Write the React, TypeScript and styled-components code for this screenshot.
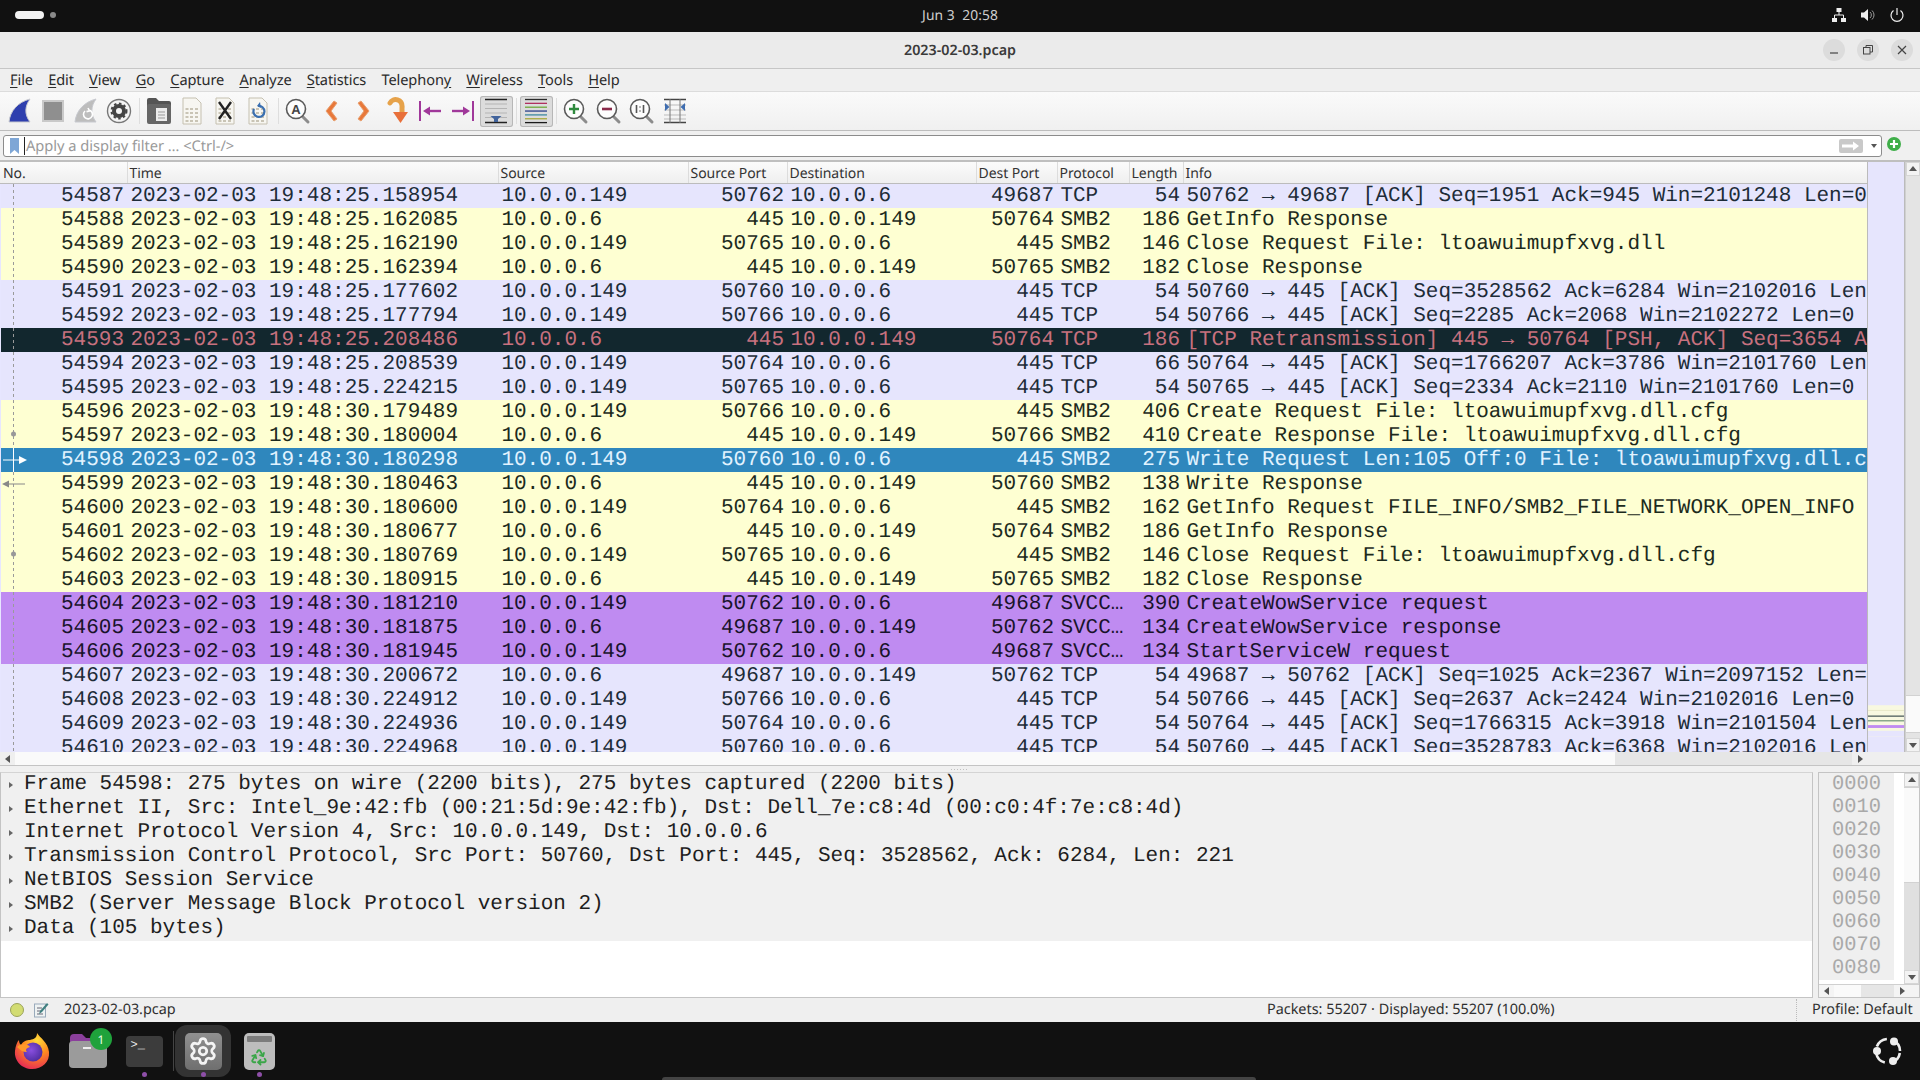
import React from "react";
import styled, { createGlobalStyle } from "styled-components";
import { Recycle, Settings } from "lucide-react";

const Global = createGlobalStyle`
  html, body { margin: 0; padding: 0; background: #111; }
  * { box-sizing: border-box; }
  body { font-family: "Noto Sans", sans-serif; text-rendering: geometricPrecision; }
`;

const Screen = styled.div`
  width: 1920px; height: 1080px; overflow: hidden;
  display: flex; flex-direction: column; background: #f0f0f0;
`;

/* Top bar */
const TopBar = styled.div`
  height: 32px; flex: none; background: #111; color: #cfcfcf;
  display: grid; grid-template-columns: 1fr auto 1fr; align-items: center;
  padding: 0 15px 2px 15px;
`;
const Workspaces = styled.div`display: flex; align-items: center; gap: 6px;`;
const WorkspacePill = styled.span`width: 29px; height: 8px; border-radius: 4px; background: #f2f2f2;`;
const WorkspaceDot = styled.span`width: 6px; height: 6px; border-radius: 50%; background: #8a8a8a;`;
const Clock = styled.div`font-size: 13.8px; letter-spacing: .1px; white-space: pre;`;
const Tray = styled.div`display: flex; justify-content: flex-end; align-items: center; gap: 13px;`;

/* Title bar */
const TitleBar = styled.div`
  height: 37px; flex: none; background: #ebebeb; border-bottom: 1px solid #c6c6c6;
  display: grid; grid-template-columns: 1fr auto 1fr; align-items: center;
`;
const Title = styled.div`grid-column: 2; font-size: 14.3px; font-weight: 600; color: #3a3a3a;`;
const WindowButtons = styled.div`grid-column: 3; display: flex; justify-content: flex-end; gap: 12px; padding-right: 7px;`;
const WindowButton = styled.div`
  width: 22px; height: 22px; border-radius: 50%; background: #dcdcdc;
  display: flex; align-items: center; justify-content: center;
`;

/* Menu */
const MenuBar = styled.div`
  height: 23px; flex: none; background: #efefef; border-bottom: 1px solid #dcdcdc;
  display: flex; align-items: center; gap: 15.2px; padding-left: 10px;
  font-size: 14.6px; color: #2b2b2b; letter-spacing: -.1px;
`;
const Mnemonic = styled.span`text-decoration: underline; text-underline-offset: 2px;`;

/* Toolbar */
const ToolBar = styled.div`
  height: 39px; flex: none; display: flex; align-items: center; padding-left: 3.5px;
  background: linear-gradient(#fafafa, #f0f0f0); border-bottom: 1px solid #bdbdbd;
`;
const ToolButton = styled.div<{ $on?: boolean }>`
  width: 33px; height: 31px; display: flex; align-items: center; justify-content: center;
  border-radius: 3px; flex: none;
  ${p => p.$on ? "background:#dcdcdc; box-shadow: inset 0 0 0 1px #b7b7b7;" : ""}
`;
const ToolSep = styled.div`width: 7px; height: 26px; flex: none;
  &::after { content: ""; display: block; width: 1px; height: 26px; margin: 0 auto; background: #dedede; }
`;

/* Filter */
const FilterBar = styled.div`
  height: 31px; flex: none; padding: 4px 0 0 3px; display: flex; align-items: flex-start;
  background: #f0f0f0; border-bottom: 2px solid #bfbfbf;
`;
const FilterBox = styled.div`
  width: 1879px; height: 22px; background: #fff; border: 1px solid #8c8c8c; border-radius: 3px;
  display: flex; align-items: center; padding: 0 2px 0 5px;
`;
const Caret = styled.span`width: 1px; height: 18px; background: #222; margin: 0 0 0 4px;`;
const Placeholder = styled.span`
  flex: 1; font-size: 14.7px; color: #9a9a9a; padding-left: 1px; letter-spacing: -.05px;
`;
const ApplyButton = styled.div`
  width: 24px; height: 14px; background: #c9c9c9; border-radius: 2px; margin-right: 8px;
  display: flex; align-items: center; justify-content: center;
`;
const DropCaret = styled.span`
  width: 0; height: 0; border-left: 3px solid transparent; border-right: 3px solid transparent;
  border-top: 4px solid #555; margin-right: 2px;
`;
const AddFilter = styled.div`margin: 2px 0 0 5px; display: flex;`;

/* Packet list */
const PacketArea = styled.div`
  height: 590px; flex: none; display: grid; grid-template-columns: 1867px 38px 15px;
`;
const PacketTable = styled.div`display: flex; flex-direction: column; min-width: 0; overflow: hidden;`;
const HeaderRow = styled.div`
  height: 22px; flex: none; display: grid; grid-template-columns: 127px 371px 190px 99px 189px 81px 72px 54px 684px;
  background: linear-gradient(#fbfbfb, #efefef); border-bottom: 1px solid #bcbcbc;
`;
const HeaderCell = styled.div`
  font-size: 14px; color: #333; padding-left: 1.5px; line-height: 23px; letter-spacing: -.05px;
  border-left: 1px solid #dcdcdc; white-space: nowrap; overflow: hidden;
  &:first-child { border-left: 0; padding-left: 3px; }
`;
const Rows = styled.div`flex: 1; overflow: hidden; padding-left: 1px; background: #e7e6ff;`;

type Kind = "tcp" | "smb" | "svc" | "bad" | "sel";
const palette: Record<Kind, { bg: string; fg: string }> = {
  tcp: { bg: "#e6e5fd", fg: "#1d2c38" },
  smb: { bg: "#feffd2", fg: "#1c2a1c" },
  svc: { bg: "#bf8bf1", fg: "#19132b" },
  bad: { bg: "#12272e", fg: "#c7717f" },
  sel: { bg: "#2f87bd", fg: "#e2f3ff" },
};
const Row = styled.div<{ $kind: Kind }>`
  height: 24px; display: grid; grid-template-columns: 126px 371px 190px 99px 189px 81px 72px 54px 684px;
  position: relative; overflow: hidden;
  background: ${p => palette[p.$kind].bg}; color: ${p => palette[p.$kind].fg};
  font: 21px/26px "Liberation Mono", monospace; white-space: pre;
  &::before {
    content: ""; position: absolute; left: 12px; top: 0; bottom: 0; width: 1px;
    background: ${p => p.$kind === "sel" ? "#fff" : "repeating-linear-gradient(#9a9a9a 0 3px, transparent 3px 6px)"};
  }
`;
const Cell = styled.div<{ $right?: boolean }>`
  overflow: hidden; padding: 0 3px 0 3.4px; text-align: ${p => p.$right ? "right" : "left"};
`;
const Relation = styled.svg`position: absolute; left: 0; top: 0;`;

const Minimap = styled.svg`display: block; background: #e6e5fd; border-left: 1px solid #bbb; border-right: 1px solid #bbb;`;
const VScroll = styled.div`display: flex; flex-direction: column; background: #e4e4e4; border-left: 1px solid #d0d0d0;`;
const VBtn = styled.div`
  height: 14px; flex: none; background: #f3f3f3; display: flex; align-items: center; justify-content: center;
  border: 1px solid #d6d6d6;
`;
const VTrack = styled.div<{ $grow?: boolean; $h?: number }>`
  ${p => p.$grow ? "flex:1;" : `height:${p.$h}px; flex:none;`}
`;
const VThumb = styled.div<{ $h: number }>`
  height: ${p => p.$h}px; flex: none; background: #fafafa; border: 1px solid #d2d2d2; border-width: 1px 0;
`;
const HScrollRow = styled.div`
  height: 14px; flex: none; display: flex; background: #efefef; border-bottom: 1px solid #c4c4c4;
`;
const HBtn = styled.div`
  width: 15px; flex: none; display: flex; align-items: center; justify-content: center;
`;
const HThumb = styled.div<{ $w: number }>`
  width: ${p => p.$w}px; flex: none; background: #fafafa;
`;
const HTrack = styled.div<{ $w: number }>`width: ${p => p.$w}px; flex: none; background: #e6e6e6;`;

const Splitter = styled.div`
  height: 6px; flex: none; background: #f0f0f0; display: flex; justify-content: center; align-items: center;
  &::after { content: ""; width: 18px; height: 1px; background: repeating-linear-gradient(90deg, #c0c0c0 0 1px, transparent 1px 3px); }
`;

/* Details */
const Details = styled.div`height: 226px; flex: none; display: flex;`;
const Tree = styled.div`
  width: 1813px; flex: none; background: #fff; border: 1px solid #c4c4c4; border-top-color: #d4d4d4;
`;
const TreeRow = styled.div`
  height: 24px; background: #f0f0f0; display: flex; align-items: center; color: #1e1e1e;
  font: 21px/24px "Liberation Mono", monospace; white-space: pre;
`;
const Twisty = styled.span`
  width: 23px; flex: none; display: flex; justify-content: center; padding-right: 3px;
  &::before { content: ""; border-left: 4px solid #666; border-top: 3.5px solid transparent; border-bottom: 3.5px solid transparent; }
`;
const PaneGrip = styled.div`width: 5px; flex: none;`;
const HexPane = styled.div`
  flex: 1; min-width: 0; display: grid; grid-template-columns: 1fr 15px; grid-template-rows: 1fr 13px;
  border: 1px solid #c4c4c4; background: #fff;
`;
const HexBody = styled.div`grid-column: 1; grid-row: 1; overflow: hidden; padding: 0 10px 0 0;`;
const HexRow = styled.div`
  height: 23px; background: #efefef; color: #a9a9a9; padding-left: 13px;
  font: 20.4px/23px "Liberation Mono", monospace;
`;
const HexVScroll = styled.div`display: flex; flex-direction: column; background: #e0e0e0; grid-column: 2; grid-row: 1;`;
const HexHScroll = styled.div`display: flex; grid-column: 1 / 3; grid-row: 2; background: #f4f4f4; border-top: 1px solid #d0d0d0;`;

/* Status bar */
const StatusBar = styled.div`
  height: 24px; flex: none; display: flex; align-items: center; background: #efefef;
  font-size: 14.4px; line-height: 26px; color: #2e2e2e; padding-left: 10px;
`;
const StatusFile = styled.span`margin-left: 15px; width: 1203px;`;
const StatusPackets = styled.span`width: 529px;`;
const StatusProfile = styled.span`
  border-left: 1px dotted #bbb; padding-left: 15px; line-height: 22px;
`;

/* Dock */
const Dock = styled.div`
  height: 58px; flex: none; background: #111; position: relative;
  display: flex; align-items: center; padding: 0 16px 0 4px;
`;
const DockItem = styled.div<{ $active?: boolean }>`
  width: 56px; height: 52px; flex: none; position: relative; border-radius: 12px;
  display: flex; align-items: center; justify-content: center;
  ${p => p.$active ? "background:#333;" : ""}
`;
const DockDot = styled.span`
  position: absolute; bottom: 0px; left: 50%; margin-left: -2.5px; width: 5px; height: 5px;
  border-radius: 50%; background: #8e4fa8;
`;
const DockSep = styled.div`width: 3px; height: 40px; flex: none; display: flex; justify-content: center;
  &::after { content: ""; width: 1px; height: 100%; background: #444; }
`;
const Badge = styled.span`
  position: absolute; right: 4px; top: 3px; width: 22px; height: 22px; border-radius: 50%;
  background: #1fa23b; color: #e8ffe8; font-size: 12px; display: flex; align-items: center; justify-content: center;
`;
const SettingsTile = styled.div`
  width: 37px; height: 37px; border-radius: 5px; background: linear-gradient(#909090, #6f6f6f);
  display: flex; align-items: center; justify-content: center; color: #f4f4f4;
`;
const TrashTile = styled.div`
  width: 31px; height: 37px; border-radius: 5px; background: #bdbdbd; color: #3aa648;
  display: flex; flex-direction: column; align-items: center; padding-top: 3px; gap: 6px;
  &::before { content: ""; width: 25px; height: 6px; border-radius: 1px; background: #7c7c7c; }
`;
const TerminalTile = styled.div`
  width: 37px; height: 31px; border-radius: 4px; background: #3c3c3c; color: #eee;
  font: 12px/13px "Liberation Mono", monospace; padding: 3px 0 0 5px;
`;
const HomeHint = styled.div`
  position: absolute; left: 662px; bottom: 0; width: 594px; height: 3px; background: #444;
  border-radius: 4px 4px 0 0;
`;
const UbuntuSlot = styled.div`margin-left: auto; display: flex;`;

/* Icons */
const Shark = ({ fill, ring }: { fill: string; ring?: boolean }) => (
  <svg width="26" height="28" viewBox="0 0 26 28">
    <path d="M2 25 C3 14 11 5 23 2 C18 9 17 17 23 25 Z" fill={fill} stroke="#c7c9cf" strokeWidth="1" />
    {ring && <path d="M16 13 a4.5 4.5 0 1 1 -4 1 M15 11 l1.5 3 -3 .6" fill="none" stroke="#fff" strokeWidth="1.6" />}
  </svg>
);
const Doc = ({ children }: { children?: React.ReactNode }) => (
  <svg width="24" height="28" viewBox="0 0 24 28">
    <path d="M3 1 H16 L21 6 V27 H3 Z" fill="#f7f6f1" stroke="#c5c0b0" />
    <path d="M5.5 12 h3 M10 12 h3 M15 12 h3 M5.5 16 h3 M10 16 h3 M15 16 h3 M5.5 20 h3 M10 20 h3 M15 20 h3 M5.5 24 h3 M10 24 h3 M15 24 h3" stroke="#c9c4b5" strokeWidth="2" />
    {children}
  </svg>
);
const Magnifier = ({ children }: { children?: React.ReactNode }) => (
  <svg width="26" height="28" viewBox="0 0 26 28">
    <path d="M16.5 18.5 L23 25" stroke="#8c8c8c" strokeWidth="3" strokeLinecap="round" />
    <circle cx="11" cy="12" r="9.5" fill="#fdfdfd" stroke="#5a5a5a" strokeWidth="1.6" />
    {children}
  </svg>
);
const Chevron = ({ d }: { d: string }) => (
  <svg width="18" height="26" viewBox="0 0 18 26">
    <path d={d} fill="#e8783a" stroke="#e8a070" strokeWidth="1" strokeLinejoin="round" />
  </svg>
);
const Jump = ({ flip }: { flip?: boolean }) => (
  <svg width="24" height="24" viewBox="0 0 24 24" style={flip ? { transform: "scaleX(-1)" } : undefined}>
    <path d="M2 2 V22" stroke="#a0389a" strokeWidth="2" />
    <path d="M23 12 H10" stroke="#a0389a" strokeWidth="2.4" />
    <path d="M5 12 L12 7.5 V16.5 Z" fill="#a0389a" />
  </svg>
);
const Lines = ({ colors }: { colors: string[] }) => (
  <svg width="24" height="26" viewBox="0 0 24 26">
    {colors.map((c, i) => <path key={i} d={`M1 ${1.5 + i * 3.85} H23`} stroke={c} strokeWidth="1.3" />)}
  </svg>
);
const AutoScroll = () => (
  <svg width="24" height="26" viewBox="0 0 24 26">
    <path d="M1 1.5 H23 M1 24.5 H23" stroke="#222" strokeWidth="1.4" />
    <path d="M1 6 H23 M1 10.5 H23 M1 15 H23 M1 19.5 H23" stroke="#b4b4b4" strokeWidth="1" />
    <path d="M6.5 18 H17.5 L14 21 V24 H10 V21 Z" fill="#41639c" />
  </svg>
);
const ResizeCols = () => (
  <svg width="24" height="26" viewBox="0 0 24 26">
    <path d="M1 1.5 H23 M1 24.5 H23" stroke="#444" strokeWidth="1.3" />
    <path d="M1 7 H23 M1 12 H23 M1 17 H23 M1 21 H23" stroke="#bbb" strokeWidth="1" />
    <path d="M7 1 V25 M17 1 V25" stroke="#777" strokeWidth="1" />
    <path d="M2 5 L6.5 9 L2 13 Z M22 5 L17.5 9 L22 13 Z" fill="#3f6db0" />
  </svg>
);

const Arrow = ({ dir, size = 8, color = "#555" }: { dir: "u" | "d" | "l" | "r"; size?: number; color?: string }) => {
  const pts = { u: "0,6 8,6 4,1", d: "0,2 8,2 4,7", l: "6,0 6,8 1,4", r: "2,0 2,8 7,4" }[dir];
  return <svg width={size} height={size} viewBox="0 0 8 8"><polygon points={pts} fill={color} /></svg>;
};

const Firefox = () => (
  <svg width="38" height="38" viewBox="0 0 38 38">
    <defs>
      <radialGradient id="ffo" cx="65%" cy="20%" r="90%">
        <stop offset="0" stopColor="#ffdb3a" /><stop offset=".45" stopColor="#ff8a1f" /><stop offset="1" stopColor="#e3205c" />
      </radialGradient>
      <radialGradient id="ffp" cx="40%" cy="40%" r="70%">
        <stop offset="0" stopColor="#8a4fe0" /><stop offset="1" stopColor="#4a2a9a" />
      </radialGradient>
    </defs>
    <path d="M24 1 C27 6 35 10 36 20 C37 30 29 37 19 37 C9 37 1 29 2 19 C2.5 14 4 10 6 8 C6 11 7 12 8 13 C10 9 14 8 17 8 C21 7 24 6 24 1 Z" fill="url(#ffo)" />
    <circle cx="20" cy="20" r="9.5" fill="url(#ffp)" />
    <path d="M4 15 C8 11 15 12 17 15 C13 16 12 18 14 20 C10 20 7 18 4 15 Z" fill="#ff9a2a" />
  </svg>
);
const FolderIcon = () => (
  <svg width="40" height="36" viewBox="0 0 40 36">
    <path d="M2 5 a4 4 0 0 1 4 -4 H14 L18 5 H34 a4 4 0 0 1 4 4 V12 H2 Z" fill="#8b3f9c" />
    <rect x="1" y="8" width="38" height="27" rx="4" fill="#9b9b9b" />
    <rect x="15" y="14" width="8" height="2" fill="#eee" />
  </svg>
);
const UbuntuLogo = () => (
  <svg width="32" height="32" viewBox="0 0 32 32">
    <circle cx="16" cy="16" r="12" fill="none" stroke="#eee" strokeWidth="2.6" strokeDasharray="13 7" strokeDashoffset="-2" />
    <circle cx="22" cy="6.5" r="4" fill="#eee" /><circle cx="5" cy="16" r="4" fill="#eee" /><circle cx="21" cy="26" r="4" fill="#eee" />
  </svg>
);

const S149 = "10.0.0.149", S6 = "10.0.0.6";
type P = [Kind, string, string, string, string, string, string, string, string, string];
const packets: P[] = [
  ["tcp","54587","25.158954",S149,"50762",S6,"49687","TCP","54","50762 → 49687 [ACK] Seq=1951 Ack=945 Win=2101248 Len=0"],
  ["smb","54588","25.162085",S6,"445",S149,"50764","SMB2","186","GetInfo Response"],
  ["smb","54589","25.162190",S149,"50765",S6,"445","SMB2","146","Close Request File: ltoawuimupfxvg.dll"],
  ["smb","54590","25.162394",S6,"445",S149,"50765","SMB2","182","Close Response"],
  ["tcp","54591","25.177602",S149,"50760",S6,"445","TCP","54","50760 → 445 [ACK] Seq=3528562 Ack=6284 Win=2102016 Len"],
  ["tcp","54592","25.177794",S149,"50766",S6,"445","TCP","54","50766 → 445 [ACK] Seq=2285 Ack=2068 Win=2102272 Len=0"],
  ["bad","54593","25.208486",S6,"445",S149,"50764","TCP","186","[TCP Retransmission] 445 → 50764 [PSH, ACK] Seq=3654 A"],
  ["tcp","54594","25.208539",S149,"50764",S6,"445","TCP","66","50764 → 445 [ACK] Seq=1766207 Ack=3786 Win=2101760 Len"],
  ["tcp","54595","25.224215",S149,"50765",S6,"445","TCP","54","50765 → 445 [ACK] Seq=2334 Ack=2110 Win=2101760 Len=0"],
  ["smb","54596","30.179489",S149,"50766",S6,"445","SMB2","406","Create Request File: ltoawuimupfxvg.dll.cfg"],
  ["smb","54597","30.180004",S6,"445",S149,"50766","SMB2","410","Create Response File: ltoawuimupfxvg.dll.cfg"],
  ["sel","54598","30.180298",S149,"50760",S6,"445","SMB2","275","Write Request Len:105 Off:0 File: ltoawuimupfxvg.dll.c"],
  ["smb","54599","30.180463",S6,"445",S149,"50760","SMB2","138","Write Response"],
  ["smb","54600","30.180600",S149,"50764",S6,"445","SMB2","162","GetInfo Request FILE_INFO/SMB2_FILE_NETWORK_OPEN_INFO"],
  ["smb","54601","30.180677",S6,"445",S149,"50764","SMB2","186","GetInfo Response"],
  ["smb","54602","30.180769",S149,"50765",S6,"445","SMB2","146","Close Request File: ltoawuimupfxvg.dll.cfg"],
  ["smb","54603","30.180915",S6,"445",S149,"50765","SMB2","182","Close Response"],
  ["svc","54604","30.181210",S149,"50762",S6,"49687","SVCC…","390","CreateWowService request"],
  ["svc","54605","30.181875",S6,"49687",S149,"50762","SVCC…","134","CreateWowService response"],
  ["svc","54606","30.181945",S149,"50762",S6,"49687","SVCC…","134","StartServiceW request"],
  ["tcp","54607","30.200672",S6,"49687",S149,"50762","TCP","54","49687 → 50762 [ACK] Seq=1025 Ack=2367 Win=2097152 Len="],
  ["tcp","54608","30.224912",S149,"50766",S6,"445","TCP","54","50766 → 445 [ACK] Seq=2637 Ack=2424 Win=2102016 Len=0"],
  ["tcp","54609","30.224936",S149,"50764",S6,"445","TCP","54","50764 → 445 [ACK] Seq=1766315 Ack=3918 Win=2101504 Len"],
  ["tcp","54610","30.224968",S149,"50760",S6,"445","TCP","54","50760 → 445 [ACK] Seq=3528783 Ack=6368 Win=2102016 Len"],
];

const relationFor = (no: string) => {
  if (no === "54598") return <Relation width="28" height="24"><path d="M2 12 H20" stroke="#fff" /><path d="M18 8 L26 12 L18 16 Z" fill="#fff" /></Relation>;
  if (no === "54599") return <Relation width="28" height="24"><path d="M6 12 H24" stroke="#888" /><path d="M1 12 L8 8.5 V15.5 Z" fill="#888" /></Relation>;
  if (no === "54597" || no === "54602") return <Relation width="28" height="24"><circle cx="12.5" cy="10" r="2.5" fill="#999" /></Relation>;
  return null;
};

const menu: [string, string, string][] = [
  ["", "F", "ile"], ["", "E", "dit"], ["", "V", "iew"], ["", "G", "o"], ["", "C", "apture"], ["", "A", "nalyze"],
  ["", "S", "tatistics"], ["Telephon", "y", ""], ["", "W", "ireless"], ["", "T", "ools"], ["", "H", "elp"],
];
const headers = ["No.", "Time", "Source", "Source Port", "Destination", "Dest Port", "Protocol", "Length", "Info"];
const tree = [
  "Frame 54598: 275 bytes on wire (2200 bits), 275 bytes captured (2200 bits)",
  "Ethernet II, Src: Intel_9e:42:fb (00:21:5d:9e:42:fb), Dst: Dell_7e:c8:4d (00:c0:4f:7e:c8:4d)",
  "Internet Protocol Version 4, Src: 10.0.0.149, Dst: 10.0.0.6",
  "Transmission Control Protocol, Src Port: 50760, Dst Port: 445, Seq: 3528562, Ack: 6284, Len: 221",
  "NetBIOS Session Service",
  "SMB2 (Server Message Block Protocol version 2)",
  "Data (105 bytes)",
];
const hex = ["0000", "0010", "0020", "0030", "0040", "0050", "0060", "0070", "0080"];

export default function App() {
  return (
    <Screen>
      <Global />
      <TopBar>
        <Workspaces><WorkspacePill /><WorkspaceDot /></Workspaces>
        <Clock>Jun 3  20:58</Clock>
        <Tray>
          <svg width="16" height="16" viewBox="0 0 16 16" fill="#eee"><rect x="5.5" y="1" width="5" height="4" /><rect x="1" y="11" width="5" height="4" /><rect x="10" y="11" width="5" height="4" /><path d="M8 5 V8 M3.5 11 V8 H12.5 V11" stroke="#eee" fill="none" /></svg>
          <svg width="16" height="16" viewBox="0 0 16 16"><path d="M1 5.5 H4 L8 2 V14 L4 10.5 H1 Z" fill="#eee" /><path d="M10 5 a4 4 0 0 1 0 6 M12 3.5 a6 6 0 0 1 0 9" fill="none" stroke="#999" /></svg>
          <svg width="16" height="16" viewBox="0 0 16 16" fill="none" stroke="#eee" strokeWidth="1.2"><path d="M8 1 V8" /><path d="M4.5 3.5 a6 6 0 1 0 7 0" /></svg>
        </Tray>
      </TopBar>

      <TitleBar>
        <Title>2023-02-03.pcap</Title>
        <WindowButtons>
          <WindowButton><svg width="10" height="10"><path d="M1 8 H9" stroke="#444" strokeWidth="1.2" /></svg></WindowButton>
          <WindowButton><svg width="10" height="10" fill="none" stroke="#444"><rect x=".5" y="2.5" width="6.5" height="6.5" /><path d="M3 2.5 V.5 H9.5 V7 H7" /></svg></WindowButton>
          <WindowButton><svg width="10" height="10" stroke="#444" strokeWidth="1.2"><path d="M1 1 L9 9 M9 1 L1 9" /></svg></WindowButton>
        </WindowButtons>
      </TitleBar>

      <MenuBar>
        {menu.map(([a, b, c]) => <span key={a + b + c}>{a}<Mnemonic>{b}</Mnemonic>{c}</span>)}
      </MenuBar>

      <ToolBar>
        <ToolButton><Shark fill="#2e3fae" /></ToolButton>
        <ToolButton><svg width="24" height="26"><rect x="2" y="3" width="20" height="20" fill="#8f8f8f" stroke="#c9c9c9" strokeWidth="2" /></svg></ToolButton>
        <ToolButton><Shark fill="#bdbdbd" ring /></ToolButton>
        <ToolButton><svg width="26" height="26" viewBox="0 0 26 26"><circle cx="13" cy="13" r="11.5" fill="#f4f4f4" stroke="#777" strokeWidth="1.4" /><circle cx="13" cy="13" r="7" fill="#444" /><circle cx="13" cy="13" r="3" fill="#f4f4f4" /><circle cx="13" cy="13" r="7.5" fill="none" stroke="#444" strokeWidth="2" strokeDasharray="2.5 2.5" /></svg></ToolButton>
        <ToolSep />
        <ToolButton><svg width="26" height="28" viewBox="0 0 26 28"><path d="M1 3 a2 2 0 0 1 2 -2 H10 L13 4 H23 a2 2 0 0 1 2 2 V9 H1 Z" fill="#555" /><rect x="1" y="7" width="24" height="20" rx="2" fill="#666" /><rect x="10" y="11" width="11" height="13" fill="#ececec" /><path d="M12 15 h7 M12 18 h7 M12 21 h7" stroke="#999" /></svg></ToolButton>
        <ToolButton><Doc /></ToolButton>
        <ToolButton><Doc><path d="M6 5 L18 22 M18 5 L6 22" stroke="#222" strokeWidth="2.4" /></Doc></ToolButton>
        <ToolButton><Doc><path d="M8 12 a5.5 5.5 0 1 0 4 -3" fill="none" stroke="#3a6fb0" strokeWidth="2.2" /><path d="M14 5 L11 9 L15 11 Z" fill="#3a6fb0" /></Doc></ToolButton>
        <ToolSep />
        <ToolButton><Magnifier><text x="11" y="16.5" textAnchor="middle" fontSize="13" fontWeight="700" fontFamily="Liberation Sans, sans-serif" fill="#444">A</text></Magnifier></ToolButton>
        <ToolButton><Chevron d="M12 3 L15 5 L9 13 L15 21 L12 23 L4 13 Z" /></ToolButton>
        <ToolButton><Chevron d="M6 3 L3 5 L9 13 L3 21 L6 23 L14 13 Z" /></ToolButton>
        <ToolButton><svg width="24" height="28" viewBox="0 0 24 28"><path d="M5 6 C8 0 18 2 17 11 V17" fill="none" stroke="#e6a24a" strokeWidth="5" strokeLinecap="round" /><path d="M8 15 H23 L15.5 26 Z" fill="#e8703a" /></svg></ToolButton>
        <ToolButton><Jump /></ToolButton>
        <ToolButton><Jump flip /></ToolButton>
        <ToolButton $on><AutoScroll /></ToolButton>
        <ToolSep />
        <ToolButton $on><Lines colors={["#2a2a2a", "#b03060", "#6ea83c", "#2a3f8a", "#3f8aa0", "#a8a83c", "#1a1a1a"]} /></ToolButton>
        <ToolSep />
        <ToolButton><Magnifier><path d="M6 12 H16 M11 7 V17" stroke="#2f8a3e" strokeWidth="2.4" /></Magnifier></ToolButton>
        <ToolButton><Magnifier><path d="M6 12 H16" stroke="#8a2a4a" strokeWidth="2.6" /></Magnifier></ToolButton>
        <ToolButton><Magnifier><path d="M7.5 8 V16 M14.5 8 V16" stroke="#555" strokeWidth="1.6" /><path d="M11 9.5 V10.5 M11 13.5 V14.5" stroke="#555" strokeWidth="1.6" /></Magnifier></ToolButton>
        <ToolButton><ResizeCols /></ToolButton>
      </ToolBar>

      <FilterBar>
        <FilterBox>
          <svg width="11" height="16" viewBox="0 0 11 16"><path d="M1 0 H10 V16 L5.5 12 L1 16 Z" fill="#7ea6d6" /></svg>
          <Caret />
          <Placeholder>Apply a display filter … &lt;Ctrl-/&gt;</Placeholder>
          <ApplyButton><svg width="18" height="10" viewBox="0 0 18 10"><path d="M0 3.5 H11 V0.5 L17 5 L11 9.5 V6.5 H0 Z" fill="#fff" /></svg></ApplyButton>
          <DropCaret />
        </FilterBox>
        <AddFilter><svg width="14" height="14" viewBox="0 0 14 14"><circle cx="7" cy="7" r="7" fill="#3fae49" /><path d="M7 3 V11 M3 7 H11" stroke="#fff" strokeWidth="2.2" /></svg></AddFilter>
      </FilterBar>

      <PacketArea>
        <PacketTable>
          <HeaderRow>{headers.map(h => <HeaderCell key={h}>{h}</HeaderCell>)}</HeaderRow>
          <Rows>
            {packets.map(p => (
              <Row key={p[1]} $kind={p[0]}>
                {relationFor(p[1])}
                <Cell $right>{p[1]}</Cell>
                <Cell>{`2023-02-03 19:48:${p[2]}`}</Cell>
                <Cell>{p[3]}</Cell>
                <Cell $right>{p[4]}</Cell>
                <Cell>{p[5]}</Cell>
                <Cell $right>{p[6]}</Cell>
                <Cell>{p[7]}</Cell>
                <Cell $right>{p[8]}</Cell>
                <Cell>{p[9]}</Cell>
              </Row>
            ))}
          </Rows>
        </PacketTable>
        <Minimap width="38" height="590" viewBox="0 0 38 590">
          <rect x="0" y="557" width="38" height="33" fill="#f8f8e0" />
          <rect x="0" y="562" width="38" height="1" fill="#e8e8c8" />
          <rect x="0" y="568" width="38" height="1" fill="#12272e" />
          <rect x="0" y="573" width="38" height="1" fill="#4a7a5a" />
          <rect x="0" y="578" width="38" height="3" fill="#bf8bf1" />
          <rect x="0" y="584" width="38" height="6" fill="#e6e5fd" />
        </Minimap>
        <VScroll>
          <VBtn><Arrow dir="u" /></VBtn>
          <VTrack $h={519} />
          <VThumb $h={38} />
          <VTrack $grow />
          <VBtn><Arrow dir="d" /></VBtn>
        </VScroll>
      </PacketArea>
      <HScrollRow>
        <HBtn><Arrow dir="l" /></HBtn>
        <HThumb $w={1600} />
        <HTrack $w={237} />
        <HBtn><Arrow dir="r" /></HBtn>
      </HScrollRow>
      <Splitter />

      <Details>
        <Tree>
          {tree.map(t => <TreeRow key={t}><Twisty />{t}</TreeRow>)}
        </Tree>
        <PaneGrip />
        <HexPane>
          <HexBody>{hex.map(h => <HexRow key={h}>{h}</HexRow>)}</HexBody>
          <HexVScroll>
            <VBtn><Arrow dir="u" /></VBtn>
            <VThumb $h={96} />
            <VTrack $grow />
            <VBtn><Arrow dir="d" /></VBtn>
          </HexVScroll>
          <HexHScroll>
            <HBtn><Arrow dir="l" /></HBtn>
            <HThumb $w={27} />
            <HTrack $w={33} />
            <HBtn><Arrow dir="r" /></HBtn>
          </HexHScroll>
        </HexPane>
      </Details>

      <StatusBar>
        <svg width="14" height="14"><circle cx="7" cy="7" r="6.5" fill="#d2dc72" stroke="#9aa25a" /></svg>
        <svg width="16" height="16" viewBox="0 0 16 16" style={{ marginLeft: 9 }}><rect x="1.5" y="2" width="11" height="13" fill="#eef2f2" stroke="#9ab" /><path d="M4 6 H9 M4 9 H8 M4 12 H10" stroke="#667" /><path d="M14 1 L7 9 L6 12 L9 10 L15.5 2.5 Z" fill="#3f7f7f" /></svg>
        <StatusFile>2023-02-03.pcap</StatusFile>
        <StatusPackets>Packets: 55207 · Displayed: 55207 (100.0%)</StatusPackets>
        <StatusProfile>Profile: Default</StatusProfile>
      </StatusBar>

      <Dock>
        <DockItem><Firefox /></DockItem>
        <DockItem><FolderIcon /><Badge>1</Badge></DockItem>
        <DockItem><TerminalTile>&gt;_</TerminalTile><DockDot /></DockItem>
        <DockSep />
        <DockItem $active><SettingsTile><Settings size={30} strokeWidth={2.2} /></SettingsTile><DockDot /></DockItem>
        <DockItem><TrashTile><Recycle size={18} strokeWidth={2.4} /></TrashTile><DockDot /></DockItem>
        <UbuntuSlot><UbuntuLogo /></UbuntuSlot>
        <HomeHint />
      </Dock>
    </Screen>
  );
}
